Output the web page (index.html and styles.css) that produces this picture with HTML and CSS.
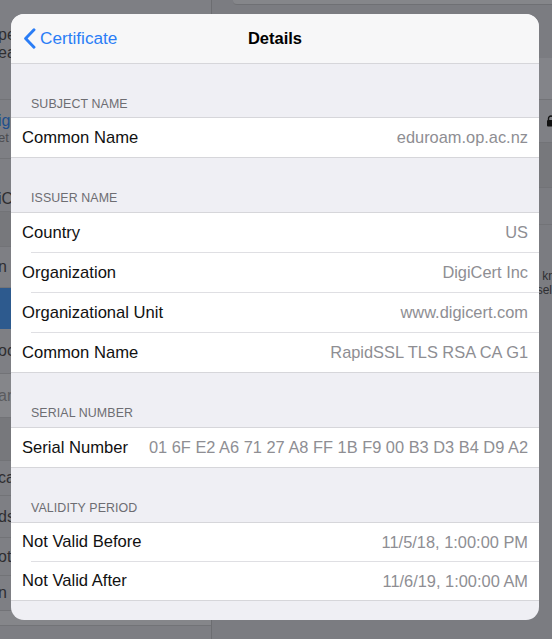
FILE: index.html
```html
<!DOCTYPE html>
<html lang="en">
<head>
<meta charset="utf-8">
<title>Details</title>
<link rel="stylesheet" href="styles.css">
</head>
<body>
<div class="backdrop">
  <div class="split-left">
    <div class="l-cell l-c1"><span class="frag">pe</span><span class="frag">ea</span></div>
    <div class="l-cell l-c2"><span class="frag f-blue">ig</span><span class="frag f-small">et</span></div>
    <div class="l-cell l-c3"><span class="frag">iC</span></div>
    <div class="l-gap l-g1"></div>
    <div class="l-cell l-c4"><span class="frag">n</span></div>
    <div class="l-cell l-sel"></div>
    <div class="l-cell l-c5"><span class="frag">oc</span></div>
    <div class="l-cell l-c6 l-light"><span class="frag f-dim">ar</span></div>
    <div class="l-gap l-g2"></div>
    <div class="l-cell l-c7"><span class="frag">ca</span></div>
    <div class="l-cell l-c8"><span class="frag">ds</span></div>
    <div class="l-cell l-c9"><span class="frag">ot</span></div>
    <div class="l-cell l-c10"><span class="frag">n</span></div>
    <div class="l-cell l-c11 l-light"></div>
  </div>
  <div class="split-right">
    <div class="r-top"><div class="r-search"></div></div>
    <div class="r-cell r-c1"></div>
    <div class="r-cell r-c2">
      <svg class="lock" width="10" height="12" viewBox="0 0 10 12" aria-hidden="true"><path d="M2.5 5V3.5a2.5 2.5 0 0 1 5 0V5" fill="none" stroke="#111" stroke-width="1.4"/><rect x="1" y="5" width="8" height="6.5" rx="1" fill="#111"/></svg>
    </div>
    <div class="r-gap"></div>
    <div class="r-cell r-c3"></div>
    <div class="r-foot"><span class="r-line r-l1">kn</span><span class="r-line r-l2">sel</span></div>
  </div>
</div>

<div class="sheet">
  <header class="nav">
    <a class="back" href="#">
      <svg class="chev" width="13" height="21" viewBox="0 0 13 21" aria-hidden="true"><path d="M11 1.8 L2.6 10.5 L11 19.2" fill="none" stroke="currentColor" stroke-width="2.9" stroke-linecap="round" stroke-linejoin="round"/></svg>
      <span>Certificate</span>
    </a>
    <h1 class="title">Details</h1>
    <span class="nav-spacer"></span>
  </header>

  <div class="content">
    <section class="group group-first">
      <h2 class="group-title">SUBJECT NAME</h2>
      <ul class="rows">
        <li class="row"><span class="label">Common Name</span><span class="value">eduroam.op.ac.nz</span></li>
      </ul>
    </section>

    <section class="group">
      <h2 class="group-title">ISSUER NAME</h2>
      <ul class="rows">
        <li class="row"><span class="label">Country</span><span class="value">US</span></li>
        <li class="row"><span class="label">Organization</span><span class="value">DigiCert Inc</span></li>
        <li class="row"><span class="label">Organizational Unit</span><span class="value">www.digicert.com</span></li>
        <li class="row"><span class="label">Common Name</span><span class="value">RapidSSL TLS RSA CA G1</span></li>
      </ul>
    </section>

    <section class="group">
      <h2 class="group-title">SERIAL NUMBER</h2>
      <ul class="rows">
        <li class="row"><span class="label">Serial Number</span><span class="value">01 6F E2 A6 71 27 A8 FF 1B F9 00 B3 D3 B4 D9 A2</span></li>
      </ul>
    </section>

    <section class="group group-validity">
      <h2 class="group-title">VALIDITY PERIOD</h2>
      <ul class="rows">
        <li class="row"><span class="label">Not Valid Before</span><span class="value">11/5/18, 1:00:00 PM</span></li>
        <li class="row"><span class="label">Not Valid After</span><span class="value">11/6/19, 1:00:00 AM</span></li>
      </ul>
    </section>
  </div>
</div>
</body>
</html>
```

FILE: styles.css
```css
* { box-sizing: border-box; }

html, body {
  margin: 0;
  padding: 0;
}

body {
  width: 552px;
  height: 639px;
  overflow: hidden;
  position: relative;
  background: #7b7c81;
  font-family: "Liberation Sans", Arial, Helvetica, sans-serif;
  -webkit-font-smoothing: antialiased;
}

/* ---------- dimmed split view behind the sheet ---------- */
.backdrop {
  display: flex;
  height: 639px;
}

.split-left {
  width: 212px;
  flex: none;
  display: flex;
  flex-direction: column;
  border-right: 1px solid #6c6d71;
  background: #7d7e83;
}

.split-right {
  flex: 1;
  display: flex;
  flex-direction: column;
  background: #7b7c81;
}

.l-cell {
  display: flex;
  flex-direction: column;
  justify-content: center;
  border-bottom: 1px solid #727377;
  background: #7e7f84;
  flex: none;
}

.l-gap {
  flex: none;
  background: #77787c;
  border-bottom: 1px solid #727377;
}

.l-light { background: #85868a; }

.frag {
  display: block;
  font-size: 16px;
  line-height: 18px;
  color: #2e2e31;
  margin-left: -2px;
  white-space: nowrap;
}
.f-blue { color: #1e4f8c; }
.f-small { font-size: 13px; line-height: 16px; color: #4a4b4f; }
.f-dim { color: #5a5b5f; }

.l-c1 { height: 100px; justify-content: flex-start; padding-top: 26px; }
.l-c2 { height: 59px; }
.l-c3 { height: 53px; justify-content: flex-end; padding-bottom: 3px; }
.l-g1 { height: 35px; }
.l-c4 { height: 41px; }
.l-sel { height: 41px; background: #2d5a8e; border-bottom-color: #2d5a8e; }
.l-c5 { height: 45px; }
.l-c6 { height: 44px; }
.l-g2 { height: 43px; }
.l-c7 { height: 35px; }
.l-c8 { height: 42px; }
.l-c9 { height: 38px; }
.l-c10 { height: 35px; }
.l-c11 { height: 15px; }

.r-top {
  height: 58px;
  flex: none;
  padding-left: 21px;
}
.r-search {
  height: 5px;
  background: #85868a;
  border-bottom: 1px solid #6f7074;
  border-bottom-left-radius: 4px;
}

.r-cell {
  flex: none;
  background: #7f8085;
  border-bottom: 1px solid #727377;
}
.r-c1 { height: 42px; background: #838489; }
.r-c2 {
  height: 43px;
  display: flex;
  align-items: center;
  justify-content: flex-end;
}
.lock { margin-right: -4px; }
.r-gap { height: 45px; flex: none; background: #77787c; border-bottom: 1px solid #727377; }
.r-c3 { height: 37px; background: #7b7c81; }

.r-foot {
  display: flex;
  flex-direction: column;
  align-items: flex-end;
  padding-top: 44px;
}
.r-line {
  font-size: 12px;
  line-height: 14px;
  color: #2e2e31;
  white-space: nowrap;
}
.r-l1 { margin-right: -3px; }

/* ---------- sheet ---------- */
.sheet {
  position: absolute;
  left: 11px;
  top: 14px;
  width: 528px;
  height: 606px;
  border-radius: 13px;
  overflow: hidden;
  background: #efeff4;
}

.nav {
  height: 50px;
  background: #f7f7f8;
  border-bottom: 1px solid #d6d6da;
  display: grid;
  grid-template-columns: 1fr auto 1fr;
  align-items: center;
}

.back {
  display: flex;
  align-items: center;
  gap: 4px;
  padding-left: 12px;
  color: #2a7df6;
  text-decoration: none;
  font-size: 17.2px;
  line-height: 21px;
  padding-bottom: 1px;
}
.chev { display: block; flex: none; }

.title {
  margin: 0;
  font-size: 16.5px;
  font-weight: bold;
  color: #000;
  line-height: 21px;
  padding-bottom: 1px;
}

.content {
  display: flex;
  flex-direction: column;
}

.group-title {
  margin: 0;
  padding: 33px 20px 6px;
  font-size: 12.4px;
  line-height: 15px;
  font-weight: normal;
  color: #6d6d72;
  letter-spacing: 0.1px;
}
.group-first .group-title { padding-top: 33px; padding-bottom: 5px; }

.rows {
  list-style: none;
  margin: 0;
  padding: 0;
  background: #fff;
  border-top: 1px solid #d6d6da;
  border-bottom: 1px solid #d6d6da;
}

.row {
  height: 39px;
  box-sizing: content-box;
  display: flex;
  align-items: center;
  justify-content: space-between;
  padding: 0 11px;
  white-space: nowrap;
}
.row + .row {
  padding-top: 1px;
  background: linear-gradient(#dfdfe3, #dfdfe3) 20px 0 / calc(100% - 20px) 1px no-repeat;
}
.group-validity .row { height: 38px; }

.label { color: #111; font-size: 16.6px; }
.value { color: #8e8e93; font-size: 16.4px; }
```
